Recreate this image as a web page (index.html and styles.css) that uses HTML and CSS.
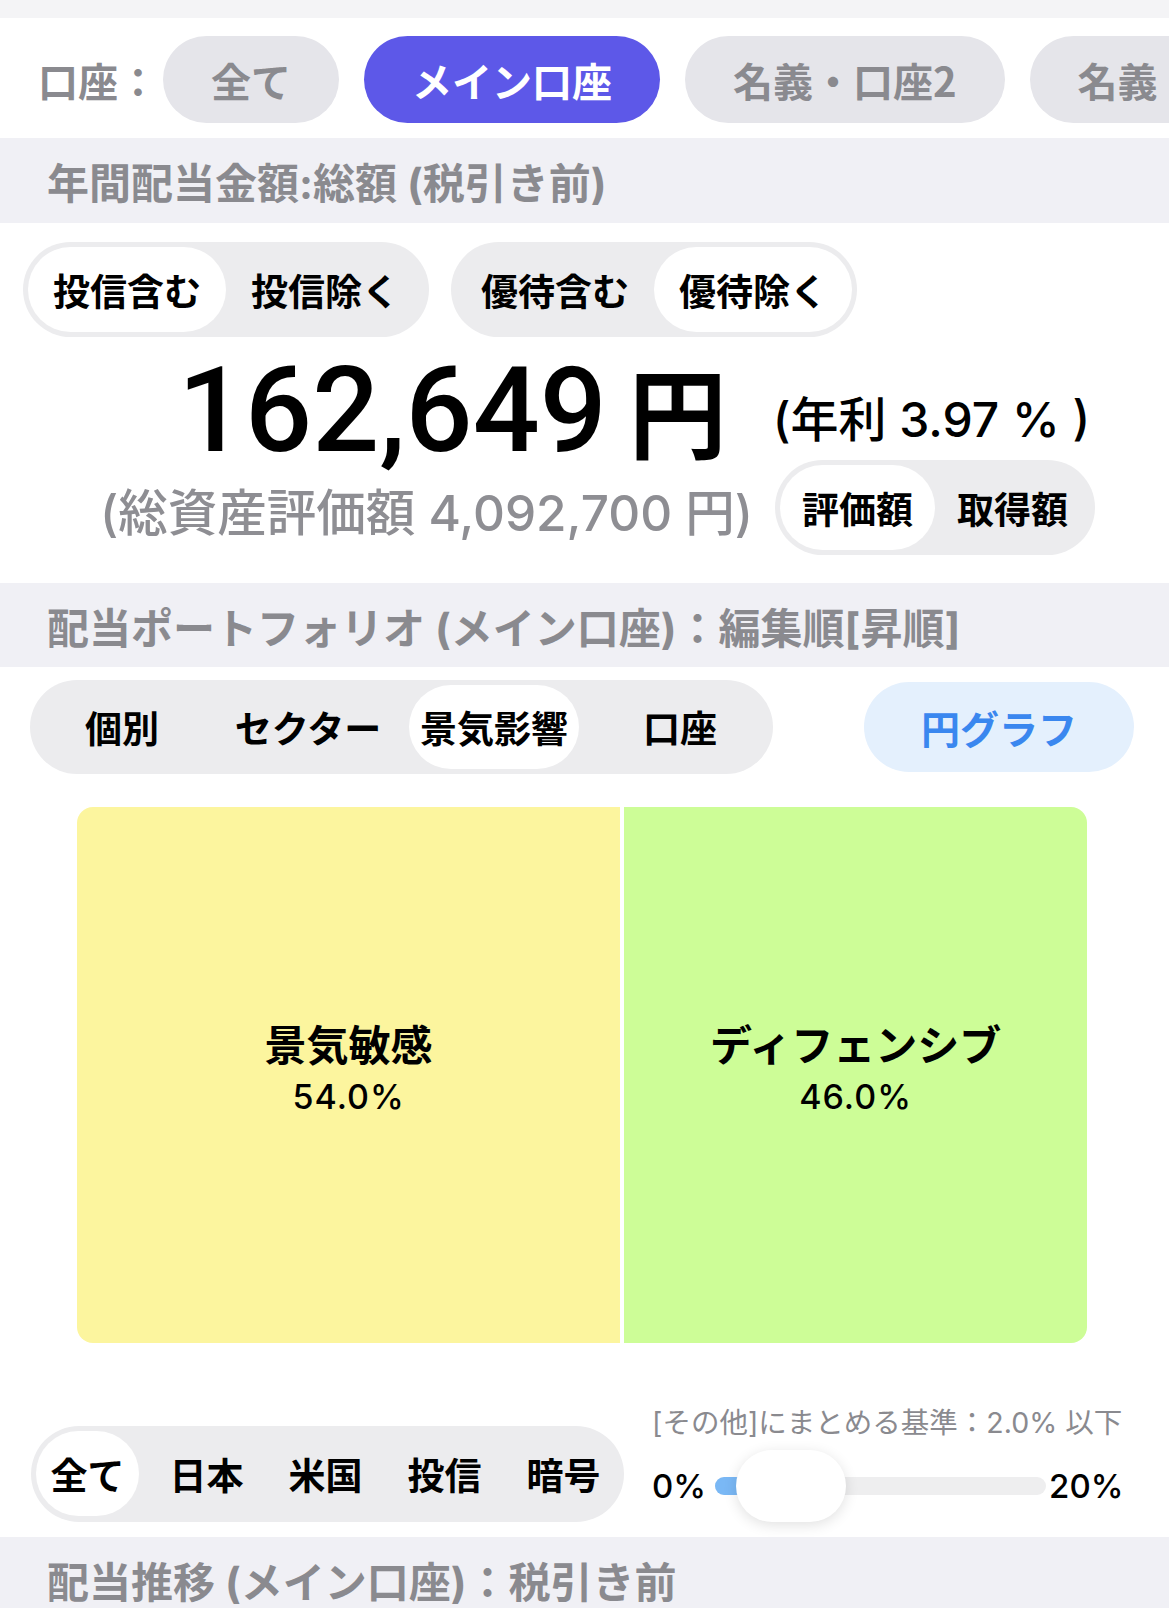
FILE: index.html
```html
<!DOCTYPE html>
<html lang="ja">
<head>
<meta charset="utf-8">
<title>配当ポートフォリオ</title>
<link rel="stylesheet" href="styles.css">
</head>
<body>
<div class="topstrip"></div>

<div class="accounts">
  <span class="accounts-label">口座：</span>
  <span class="pill">全て</span>
  <span class="pill pill-active">メイン口座</span>
  <span class="pill">名義・口座2</span>
  <span class="pill">名義・口座3</span>
</div>

<div class="band"><h2>年間配当金額:総額 (税引き前)</h2></div>

<div class="filters">
  <div class="seg seg-two">
    <span class="seg-item on">投信含む</span>
    <span class="seg-item">投信除く</span>
  </div>
  <div class="seg seg-two">
    <span class="seg-item">優待含む</span>
    <span class="seg-item on">優待除く</span>
  </div>
</div>

<div class="amount"><span class="amount-value">162,649</span><span class="yen">円</span><span class="amount-rate">(年利 3.97 % )</span></div>

<div class="assets">
  <span class="assets-text">(総資産評価額 4,092,700 円)</span>
  <div class="seg seg-basis">
    <span class="seg-item on">評価額</span>
    <span class="seg-item">取得額</span>
  </div>
</div>

<div class="band band-2"><h2>配当ポートフォリオ (メイン口座)：編集順[昇順]</h2></div>

<div class="view-row">
  <div class="seg seg-view">
    <span class="seg-item">個別</span>
    <span class="seg-item">セクター</span>
    <span class="seg-item on">景気影響</span>
    <span class="seg-item">口座</span>
  </div>
  <button class="chart-btn">円グラフ</button>
</div>

<div class="treemap">
  <div class="tile tile-cyc" style="flex: 54">
    <div class="tile-name">景気敏感</div>
    <div class="tile-pct">54.0%</div>
  </div>
  <div class="tile tile-def" style="flex: 46">
    <div class="tile-name">ディフェンシブ</div>
    <div class="tile-pct">46.0%</div>
  </div>
</div>

<div class="bottom">
  <div class="seg seg-region">
    <span class="seg-item on">全て</span>
    <span class="seg-item">日本</span>
    <span class="seg-item">米国</span>
    <span class="seg-item">投信</span>
    <span class="seg-item">暗号</span>
  </div>
  <div class="threshold">
    <div class="threshold-label">[その他]にまとめる基準：2.0% 以下</div>
    <div class="slider-row">
      <span class="slider-end">0%</span>
      <div class="track">
        <div class="fill" style="width: 30px"></div>
        <div class="thumb"></div>
      </div>
      <span class="slider-end slider-max">20%</span>
    </div>
  </div>
</div>

<div class="band band-3"><h2>配当推移 (メイン口座)：税引き前</h2></div>
</body>
</html>
```

FILE: styles.css
```css
html, body {
  margin: 0;
  padding: 0;
}
body {
  width: 1169px;
  background: #ffffff;
  font-family: "Inter", "Noto Sans CJK JP", sans-serif;
  color: #000;
  overflow-x: hidden;
}

.topstrip {
  height: 18px;
  background: #f4f4f6;
}

/* account pills */
.accounts {
  display: flex;
  align-items: center;
  gap: 25px;
  height: 120px;
  box-sizing: border-box;
  padding: 3px 0 0 38px;
  overflow: hidden;
  white-space: nowrap;
}
.accounts-label {
  flex: none;
  font-family: "Noto Sans CJK JP", sans-serif;
  font-size: 40px;
  font-weight: 700;
  color: #8a8a8f;
  margin-right: -20px;
}
.pill {
  flex: none;
  display: flex;
  align-items: center;
  height: 87px;
  padding: 0 48px;
  border-radius: 44px;
  background: #e5e5ea;
  color: #8a8a8f;
  font-family: "Noto Sans CJK JP", sans-serif;
  font-size: 40px;
  font-weight: 700;
}
.pill-active {
  background: #5d58e8;
  color: #ffffff;
}

/* section bands */
.band {
  height: 85px;
  background: #f0f0f5;
  display: flex;
  align-items: center;
  padding-left: 47px;
}
.band h2 {
  margin: 0;
  font-size: 42px;
  font-weight: 700;
  color: #8a8a8f;
  white-space: nowrap;
}
.band-2 {
  height: 84px;
  margin-top: 28px;
}
.band-3 {
  margin-top: 15px;
}

/* segmented controls */
.seg {
  display: flex;
  background: #ececee;
  border-radius: 999px;
  padding: 5px;
}
.seg-item {
  display: flex;
  align-items: center;
  justify-content: center;
  border-radius: 999px;
  font-family: "Noto Sans CJK JP", sans-serif;
  font-size: 37px;
  font-weight: 700;
  color: #000;
  white-space: nowrap;
}
.seg-item.on {
  background: #ffffff;
}

.filters {
  display: flex;
  gap: 22px;
  padding: 19px 0 0 23px;
}
.seg-two .seg-item {
  width: 198px;
  height: 85px;
}

/* amount */
.amount {
  margin-top: 22px;
  padding-left: 178px;
  height: 100px;
  font-family: "Roboto", sans-serif;
  font-size: 118px;
  line-height: 100px;
  white-space: nowrap;
}
.amount-value {
  font-weight: 500;
}
.yen {
  font-family: "Noto Sans CJK JP", sans-serif;
  font-size: 98px;
  font-weight: 700;
  line-height: 1;
  margin-left: 22px;
}
.amount-rate {
  font-family: "Inter", "Noto Sans CJK JP", sans-serif;
  font-size: 48px;
  font-weight: 500;
  line-height: 1;
  margin-left: 46px;
  vertical-align: 14px;
}

.assets {
  display: flex;
  align-items: center;
  height: 95px;
  margin-top: 1px;
  padding: 0 74px 0 100px;
}
.assets-text {
  font-size: 49.5px;
  font-weight: 500;
  color: #8e8e93;
  white-space: nowrap;
  padding-top: 4px;
}
.seg-basis {
  margin-left: auto;
}
.seg-basis .seg-item {
  width: 155px;
  height: 85px;
}

/* view row */
.view-row {
  display: flex;
  align-items: center;
  justify-content: space-between;
  margin-top: 13px;
  height: 94px;
  padding: 0 35px 0 30px;
}
.seg-view {
  gap: 16px;
  padding: 5px 8px 5px 7px;
}
.seg-view .seg-item {
  width: 170px;
  height: 84px;
}
.chart-btn {
  width: 270px;
  height: 90px;
  border: none;
  border-radius: 45px;
  background: #e4f0fd;
  color: #3a87ef;
  font-family: "Noto Sans CJK JP", sans-serif;
  font-size: 39px;
  font-weight: 700;
  padding: 0;
}

/* treemap */
.treemap {
  display: flex;
  gap: 4px;
  height: 536px;
  margin: 33px 82px 0 77px;
  border-radius: 16px;
  overflow: hidden;
}
.tile {
  display: flex;
  flex-direction: column;
  align-items: center;
  justify-content: center;
  padding-bottom: 10px;
  box-sizing: border-box;
}
.tile-cyc {
  background: #fcf59e;
}
.tile-def {
  background: #cdfd97;
}
.tile-name {
  font-family: "Noto Sans CJK JP", sans-serif;
  font-size: 42px;
  font-weight: 700;
  line-height: 54px;
}
.tile-pct {
  font-size: 34px;
  font-weight: 500;
  line-height: 54px;
  letter-spacing: 1px;
}

/* bottom controls */
.bottom {
  display: flex;
  align-items: flex-end;
  gap: 28px;
  margin-top: 62px;
  padding-left: 31px;
}
.seg-region {
  gap: 16px;
  padding: 5px 9px 6px 5px;
}
.seg-region .seg-item {
  width: 103px;
  height: 85px;
}
.threshold-label {
  font-size: 28.5px;
  font-weight: 400;
  color: #8a8a8f;
  line-height: 36px;
  margin-bottom: 9px;
  white-space: nowrap;
}
.slider-row {
  display: flex;
  align-items: center;
  height: 72px;
}
.slider-end {
  font-size: 33px;
  font-weight: 500;
  color: #000;
}
.track {
  position: relative;
  width: 331px;
  height: 18px;
  border-radius: 9px;
  background: #eeeeef;
  margin-left: 9px;
}
.fill {
  position: absolute;
  left: 0;
  top: 0;
  height: 100%;
  border-radius: 9px;
  background: #7ab8f5;
}
.thumb {
  position: absolute;
  left: 21px;
  top: -27px;
  width: 110px;
  height: 72px;
  border-radius: 36px;
  background: #ffffff;
  box-shadow: 0 3px 14px rgba(0, 0, 0, 0.12);
}
.slider-max {
  margin-left: 3px;
}
```
